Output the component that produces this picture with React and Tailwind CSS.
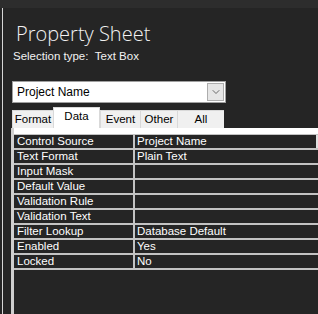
import { ChevronDown } from "lucide-react"

const rows = [
    ["Control Source", "Project Name"],
    ["Text Format", "Plain Text"],
    ["Input Mask", ""],
    ["Default Value", ""],
    ["Validation Rule", ""],
    ["Validation Text", ""],
    ["Filter Lookup", "Database Default"],
    ["Enabled", "Yes"],
    ["Locked", "No"],
]

const tabs = ["Format", "Data", "Event", "Other", "All"]
const tabWidths = {Format: "w-[41px]", Data: "w-[47px]", Event: "w-[40px]", Other: "w-[37px]", All: "w-[47px]"}

export default function App() {
    return (
        <div className="w-[318px] h-[314px] bg-[#252525] flex flex-col overflow-hidden font-['Open_Sans',sans-serif] text-white select-none">
            <div className="h-[8px] bg-[#2d2d2d] shrink-0" />
            <div className="flex flex-1 min-h-0">
                <div className="w-[2px] shrink-0" />
                <div className="w-px bg-[#d6d6d6] shrink-0" />
                <div className="flex-1 flex flex-col min-w-0">
                    <h1 className="ml-[13px] mt-[12px] h-[28px] text-[20px] leading-[28px] font-light text-[#f2f2f2]">Property Sheet</h1>
                    <p className="ml-[10px] mt-[1px] text-[11.5px] leading-[15px] font-['Liberation_Sans',sans-serif] text-[#f2f2f2]">Selection type:&nbsp;&nbsp;Text Box</p>

                    <div className="ml-[9px] mt-[17px] w-[214px] h-[22px] bg-white border border-[#a0a0a0] flex items-center">
                        <span className="flex-1 pl-[4px] text-[12px] text-black font-['Liberation_Sans',sans-serif]">Project Name</span>
                        <div className="w-[17px] h-[18px] mr-px bg-[#e6e6e6] border border-[#adadad] flex items-center justify-center">
                            <ChevronDown size={12} strokeWidth={1.5} className="text-[#404040]" />
                        </div>
                    </div>

                    <div className="ml-[9px] mt-[4px] flex items-end h-[21px]">
                        {tabs.map(t => (
                            <div key={t} className={`${tabWidths[t]} ${t == "Data" ? "h-[21px] pb-[3px] bg-white border-x border-t border-[#d9d9d9] z-10" : "h-[18px] bg-[#f0f0f0] border-l border-t border-[#d9d9d9]"} flex items-center justify-center text-[11.5px] text-black font-['Liberation_Sans',sans-serif]`}>
                                {t}
                            </div>
                        ))}
                    </div>

                    <div className="ml-[8px] flex-1 flex flex-col border-l-[3px] border-[#cfcfcf]">
                        <div className="h-[6px] bg-white" />
                        <div className="flex flex-col gap-y-[2px] bg-[#c3c3c3] pt-px pb-[2px]">
                            {rows.map(([label, value], i) => (
                                <div key={label} className="flex h-[13px] text-[11.5px] leading-[13px] font-['Liberation_Sans',sans-serif]">
                                    <div className="w-[119px] bg-[#252525] pl-[3px]">{label}</div>
                                    <div className="w-[2px]" />
                                    <div className="w-[181px] bg-[#252525] pl-[2px]">{value}</div>
                                    <div className={`flex-1 ${i == 0 ? "bg-[#e0e0e0]" : "bg-[#252525]"}`} />
                                </div>
                            ))}
                        </div>
                    </div>
                </div>
            </div>
        </div>
    )
}
